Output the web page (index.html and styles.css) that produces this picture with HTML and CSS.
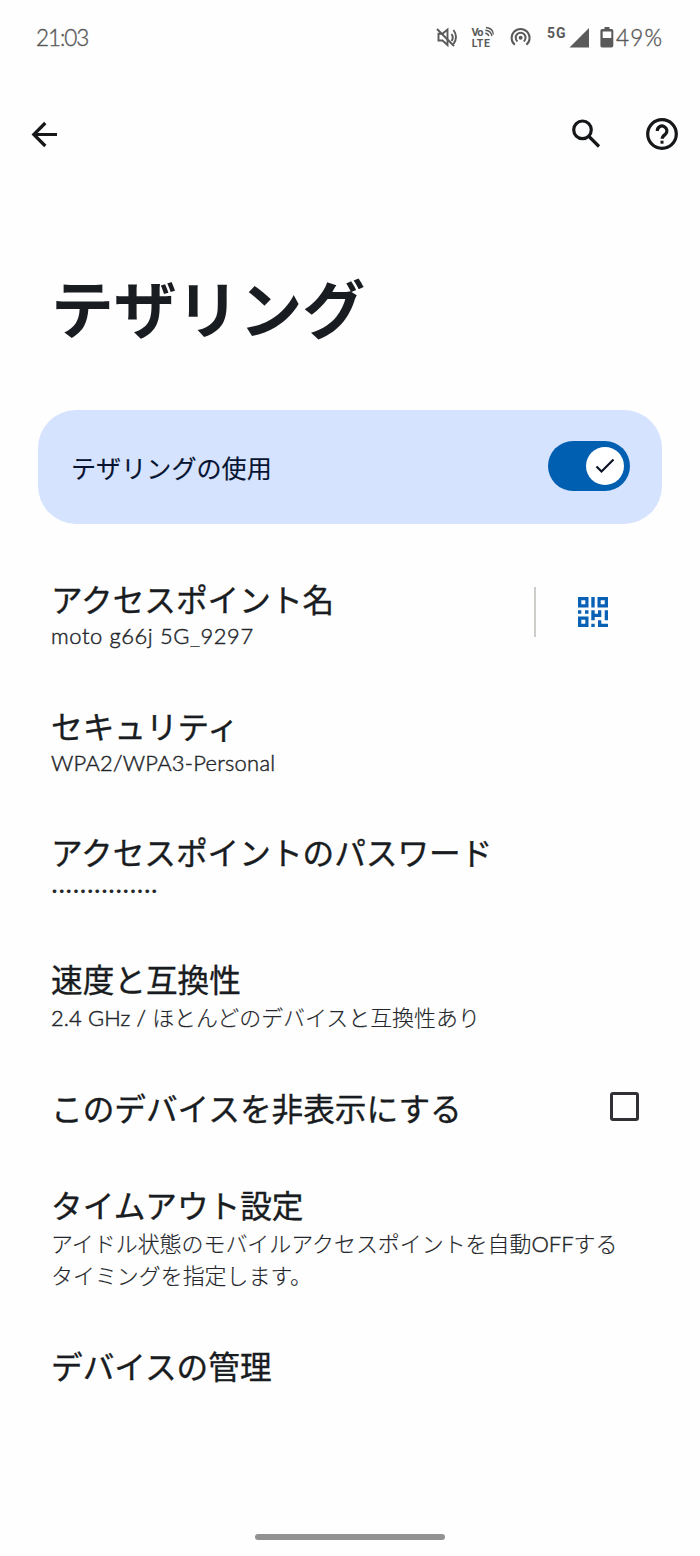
FILE: index.html
```html
<!DOCTYPE html>
<html lang="ja">
<head>
<meta charset="utf-8">
<title>テザリング</title>
<link rel="stylesheet" href="styles.css">
</head>
<body>
<div class="screen">
  <header class="status">
    <span class="clock">21:03</span>
    <svg class="status-icons" width="178" height="32" viewBox="0 0 178 32" fill="none" stroke="#5a5a5a">
      <g stroke-width="1.900">
        <path d="M2.500 12.800h4l5-4.300v15.500l-5-4.500h-4zM15.500 13q2.500 3.500 0 7M17.500 9q5 7 0 14"/>
        <path d="M1 8 18 25"/>
      </g>
      <g class="volte" fill="#5a5a5a" stroke="none">
        <text x="35.500" y="14.800" font-size="11" textLength="12">Vo</text>
        <text x="35.800" y="26" font-size="10.500" textLength="18">LTE</text>
      </g>
      <path stroke-width="1.400" d="M49.300 12.300q3 .3 3.400 2.900M49.300 9.200q5.800.2 6.600 6M50 6.500q7.200.8 7.300 7"/>
      <g stroke-width="2">
        <path d="M78.800 23.800a9 9 0 1 1 11.600 0M81.400 20.400a4.900 4.900 0 1 1 6.400 0"/>
        <circle cx="84.600" cy="16.700" r="2" fill="#5a5a5a" stroke="none"/>
      </g>
      <text class="net" x="111" y="17" font-size="14" textLength="18.500" fill="#5a5a5a" stroke="none">5G</text>
      <path fill="#5a5a5a" stroke="none" d="M133.500 26.500 153 7v19.500z"/>
      <path fill="#5a5a5a" stroke="none" fill-rule="evenodd" d="M168.500 6h5V8h2q1.800 0 1.800 1.800v15q0 1.800-1.800 1.800h-9.300q-1.800 0-1.800-1.800v-15q0-1.800 1.800-1.800h2.300zM166.700 10.500v6.500h8.600v-6.500z"/>
    </svg>
    <span class="percent">49%</span>
  </header>

  <nav class="toolbar">
    <svg class="back" width="28" height="28" viewBox="0 0 28 28"><path d="M26 14.500H3.500M14.300 3 2.800 14.500l11.500 11.500"/></svg>
    <svg class="search" width="30" height="30" viewBox="0 0 30 30"><circle cx="11.500" cy="10.800" r="8.800"/><path d="m18 17.500 10 10"/></svg>
    <svg class="help" width="34" height="34" viewBox="0 0 34 34"><circle cx="17" cy="17" r="14.300"/><path d="M12.300 14a4.800 4.800 0 1 1 8 3.400q-3.100 2.200-3.100 4.400"/><path d="M15.500 23.700h3v3h-3z" class="dot"/></svg>
  </nav>

  <h1 class="title">テザリング</h1>

  <section class="main-switch">
    <span class="switch-label">テザリングの使用</span>
    <span class="switch"><span class="thumb"><svg width="20" height="16" viewBox="0 0 20 16"><path d="m1.500 8.500 5 5L18.500 1.500"/></svg></span></span>
  </section>

  <main class="list">
    <div class="row split ap">
      <div><h2>アクセスポイント名</h2><p class="latin name">moto g66j 5G_9297</p></div>
      <div class="qr-box">
        <svg class="qr" width="30" height="30" viewBox="0 0 30 30" fill="#0961b5" fill-rule="evenodd">
          <path d="M0 0h10.500v10.500H0zM3.300 3.300v4h4v-4zM19.500 0H30v10.500H19.500zM22.700 3.300v4h4v-4zM0 19.500h10.500V30H0zM3.300 22.700v4h4v-4z"/>
          <path d="M13.300 0h3.400v10.500h-3.400zM0 13.300h3.300v3.400H0zM7 13.300h3.500v3.400H7zM13.300 13.300h3.400v3.400H20v-3.400h3.300V20h-6.600v3.300h-3.400zM26.700 13.300H30v10h-3.300zM20 23.300h3.300v3.400H30V30H20zM13.300 26.700h3.400V30h-3.400z"/>
        </svg>
      </div>
    </div>
    <div class="row security"><h2>セキュリティ</h2><p class="latin sec">WPA2/WPA3-Personal</p></div>
    <div class="row password"><h2>アクセスポイントのパスワード</h2><p class="dots">•••••••••••••••</p></div>
    <div class="row speed"><h2>速度と互換性</h2><p><span class="latin band">2.4 GHz / </span>ほとんどのデバイスと互換性あり</p></div>
    <div class="row split hide"><h2>このデバイスを非表示にする</h2><span class="checkbox"></span></div>
    <div class="row timeout"><h2>タイムアウト設定</h2><p>アイドル状態のモバイルアクセスポイントを自動<span class="latin off">OFF</span>する<br>タイミングを指定します。</p></div>
    <div class="row"><h2>デバイスの管理</h2></div>
  </main>
  <div class="home-bar"></div>
</div>
</body>
</html>
```
FILE: styles.css
```css
* { box-sizing: border-box; }
body { margin: 0; background: #fefefe; color: #191c20; font-family: Lato, "Noto Sans CJK JP", sans-serif; }
h1, h2, p { margin: 0; white-space: nowrap; }
.screen { width: 700px; height: 1556px; display: flex; flex-direction: column; overflow: hidden; }

.status { height: 74px; padding: 0 36px; display: flex; align-items: center; color: #5a5a5a; font-size: 22.5px; font-weight: 300; -webkit-text-stroke: 0.4px; }
.clock { letter-spacing: -1.1px; margin-right: auto; }
.status-icons { margin-top: -1px; -webkit-text-stroke: 0; }
.volte, .net { font-family: Roboto, sans-serif; font-weight: 700; }
.percent { width: 46px; margin-left: 2px; margin-right: 2px; letter-spacing: 1.2px; }

.toolbar { height: 120px; padding: 0 21px 0 31px; display: flex; align-items: center; }
.toolbar svg { fill: none; stroke: #151719; stroke-width: 3.2; }
.toolbar .back { margin-right: auto; }
.toolbar .search { margin-right: 44px; }
.toolbar .dot { fill: #151719; stroke: none; }

.title { margin: 65px 0 0 51px; height: 94px; line-height: 94px; font-family: "Noto Sans CJK JP", sans-serif; font-size: 62.8px; font-weight: 700; }

.main-switch { margin: 57px 38px 0; height: 114px; padding: 0 32px 0 33px; border-radius: 38px; background: #d6e3ff; display: flex; align-items: center; justify-content: space-between; }
.switch-label { font-family: "Noto Sans CJK JP", sans-serif; font-size: 25.1px; color: #071431; -webkit-text-stroke: 0.15px; }
.switch { width: 82px; height: 50px; margin-top: -2px; border-radius: 25px; background: #005fb0; padding-right: 6px; display: flex; align-items: center; justify-content: flex-end; }
.thumb { width: 38px; height: 38px; border-radius: 50%; background: #fff; display: grid; place-items: center; }
.thumb path { fill: none; stroke: #0b1425; stroke-width: 2.2; }

.list { padding: 56px 0 0 51px; }
.row h2 { height: 36px; line-height: 36px; font-family: "Noto Sans CJK JP", sans-serif; font-size: 31.65px; font-weight: 400; -webkit-text-stroke: 0.35px; }
.row p { margin-top: 4px; font-size: 21.95px; line-height: 32px; font-weight: 300; -webkit-text-stroke: 0.15px; color: #23262a; }
.row .latin { font-weight: 300; -webkit-text-stroke: 0.45px; }
.row .name { letter-spacing: 0.6px; }
.row .sec { letter-spacing: 0.25px; }
.band { letter-spacing: 0.1px; }
.split { display: flex; align-items: center; justify-content: space-between; }
.ap, .security, .password { height: 72px; margin-bottom: 54.5px; }
.qr-box { width: 166px; height: 50px; margin-top: -8px; padding-left: 42px; border-left: 2px solid #cecdca; display: flex; align-items: center; }
.row .dots { font-size: 12px; letter-spacing: 0.17px; margin-top: 6px; }
.speed { height: 75px; margin-bottom: 54px; }
.speed p { margin-top: 6px; }
.hide { height: 36px; padding-right: 61px; margin-bottom: 61px; }
.checkbox { width: 29px; height: 29px; border: 3px solid #303035; border-radius: 3px; }
.timeout { height: 106px; margin-bottom: 55px; }
.timeout p { margin-top: 6px; }

.home-bar { width: 190px; height: 6px; border-radius: 3px; background: #929292; margin: auto auto 16px; }
```
